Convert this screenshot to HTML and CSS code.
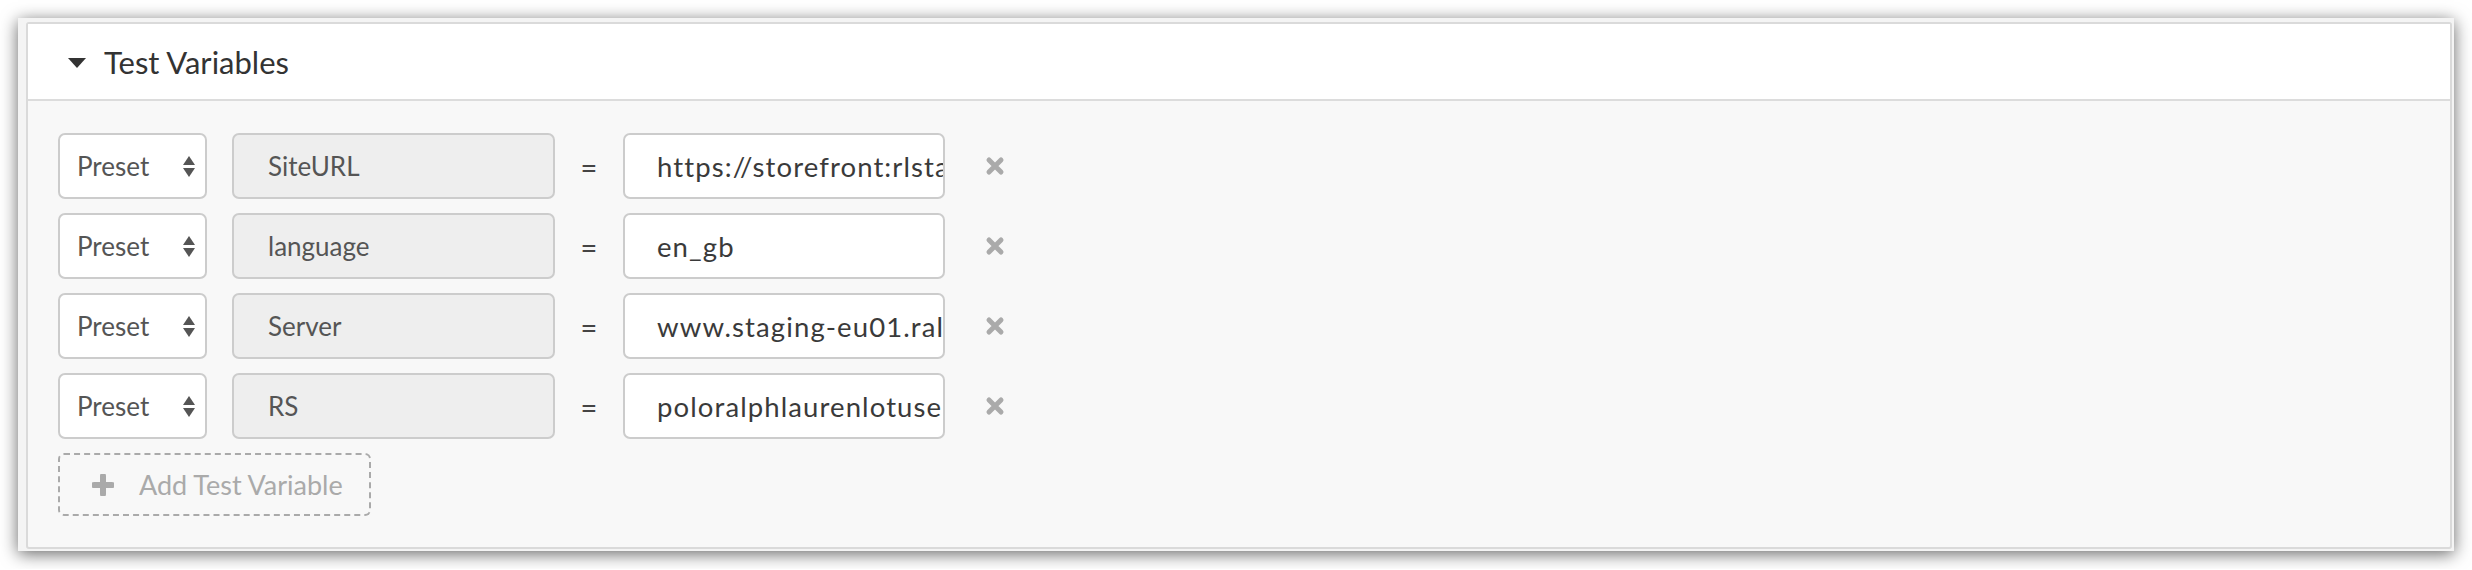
FILE: index.html
```html
<!DOCTYPE html>
<html>
<head>
<meta charset="utf-8">
<link rel="stylesheet" href="styles.css">
</head>
<body>
<div class="window">
  <div class="panel">
    <div class="header">
      <span class="caret"></span>
      <span class="title">Test Variables</span>
    </div>
    <div class="content">
      <div class="row">
        <div class="select"><span>Preset</span><span class="arrows"><i class="up"></i><i class="down"></i></span></div>
        <div class="key">SiteURL</div>
        <div class="eq">=</div>
        <div class="value">https://storefront:rlstaging</div>
        <svg class="remove" width="20" height="20" viewBox="0 0 20 20"><path d="M4 4 L16 16 M16 4 L4 16" stroke="#aaaaaa" stroke-width="5" stroke-linecap="round"/></svg>
      </div>
      <div class="row">
        <div class="select"><span>Preset</span><span class="arrows"><i class="up"></i><i class="down"></i></span></div>
        <div class="key">language</div>
        <div class="eq">=</div>
        <div class="value">en_gb</div>
        <svg class="remove" width="20" height="20" viewBox="0 0 20 20"><path d="M4 4 L16 16 M16 4 L4 16" stroke="#aaaaaa" stroke-width="5" stroke-linecap="round"/></svg>
      </div>
      <div class="row">
        <div class="select"><span>Preset</span><span class="arrows"><i class="up"></i><i class="down"></i></span></div>
        <div class="key">Server</div>
        <div class="eq">=</div>
        <div class="value">www.staging-eu01.ralphlauren.com</div>
        <svg class="remove" width="20" height="20" viewBox="0 0 20 20"><path d="M4 4 L16 16 M16 4 L4 16" stroke="#aaaaaa" stroke-width="5" stroke-linecap="round"/></svg>
      </div>
      <div class="row">
        <div class="select"><span>Preset</span><span class="arrows"><i class="up"></i><i class="down"></i></span></div>
        <div class="key">RS</div>
        <div class="eq">=</div>
        <div class="value">poloralphlaurenlotusenv</div>
        <svg class="remove" width="20" height="20" viewBox="0 0 20 20"><path d="M4 4 L16 16 M16 4 L4 16" stroke="#aaaaaa" stroke-width="5" stroke-linecap="round"/></svg>
      </div>
      <div class="add">
        <svg class="plus" width="22" height="22" viewBox="0 0 22 22"><path d="M11 2 V20 M2 11 H20" stroke="#aaaaaa" stroke-width="6" stroke-linecap="round"/></svg>
        <span>Add Test Variable</span>
      </div>
    </div>
  </div>
</div>
</body>
</html>
```
FILE: styles.css
```css
html, body {
  margin: 0;
  padding: 0;
  background: #ffffff;
}
body {
  padding: 18px;
  font-family: "Lato", "Noto Sans", sans-serif;
  color: #555555;
}
.window {
  width: 2436px;
  height: 533px;
  box-sizing: border-box;
  background: #f4f4f4;
  padding: 4px 2px 2px 8px;
  box-shadow: 0 3px 16px rgba(0, 0, 0, 0.6);
}
.panel {
  height: 100%;
  box-sizing: border-box;
  border: 2px solid #dadada;
  border-radius: 3px;
  background: #f8f8f8;
  display: flex;
  flex-direction: column;
}
.header {
  height: 75px;
  background: #ffffff;
  border-bottom: 2px solid #dcdcdc;
  display: flex;
  align-items: center;
  padding-left: 40px;
}
.caret {
  width: 0;
  height: 0;
  border-left: 9px solid transparent;
  border-right: 9px solid transparent;
  border-top: 10px solid #333333;
  margin-right: 18px;
  margin-top: 2px;
}
.title {
  font-size: 31px;
  color: #333333;
}
.content {
  padding: 32px 30px 30px;
  display: flex;
  flex-direction: column;
  gap: 14px;
}
.row {
  display: flex;
  align-items: center;
  height: 66px;
}
.select, .key, .value {
  box-sizing: border-box;
  height: 66px;
  border: 2px solid #cccccc;
  border-radius: 7px;
  font-size: 26px;
  display: flex;
  align-items: center;
  overflow: hidden;
  white-space: nowrap;
}
.select {
  width: 149px;
  background: #ffffff;
  padding: 0 10px 0 17px;
  justify-content: space-between;
}
.arrows {
  display: flex;
  flex-direction: column;
  gap: 3px;
}
.arrows i {
  display: block;
  width: 0;
  height: 0;
  border-left: 6.5px solid transparent;
  border-right: 6.5px solid transparent;
}
.arrows .up {
  border-bottom: 9px solid #555555;
}
.arrows .down {
  border-top: 9px solid #555555;
}
.key {
  width: 323px;
  margin-left: 25px;
  background: #eeeeee;
  padding-left: 34px;
}
.eq {
  width: 68px;
  text-align: center;
  font-size: 29px;
  color: #444444;
}
.value {
  width: 322px;
  background: #ffffff;
  padding-left: 32px;
  color: #3a3a3a;
  font-size: 27.5px;
  letter-spacing: 1.1px;
}
.remove {
  margin-left: 40px;
}
.add {
  box-sizing: border-box;
  width: 313px;
  height: 63px;
  border: 2px dashed #aaaaaa;
  border-radius: 6px;
  display: flex;
  align-items: center;
  padding-left: 32px;
  color: #aaaaaa;
  font-size: 27px;
}
.plus {
  margin-right: 25px;
}
```
